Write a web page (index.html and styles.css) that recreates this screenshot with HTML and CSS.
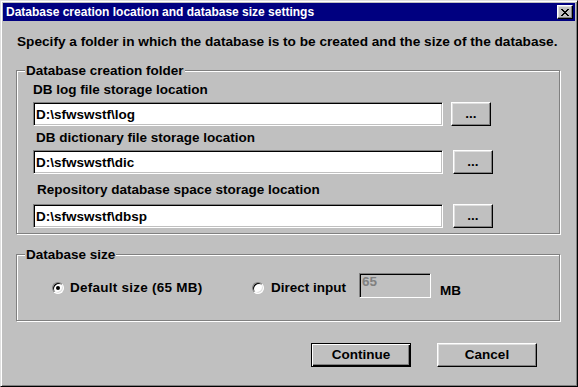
FILE: index.html
```html
<!DOCTYPE html>
<html>
<head>
<meta charset="utf-8">
<link rel="stylesheet" href="styles.css">
</head>
<body>
<div class="window">
  <div class="titlebar">
    <span class="title">Database creation location and database size settings</span>
    <span class="close">
      <svg width="8" height="7" viewBox="0 0 8 7" shape-rendering="crispEdges">
        <rect x="0" y="0" width="2" height="1"/><rect x="6" y="0" width="2" height="1"/>
        <rect x="1" y="1" width="2" height="1"/><rect x="5" y="1" width="2" height="1"/>
        <rect x="2" y="2" width="4" height="1"/>
        <rect x="3" y="3" width="2" height="1"/>
        <rect x="2" y="4" width="4" height="1"/>
        <rect x="1" y="5" width="2" height="1"/><rect x="5" y="5" width="2" height="1"/>
        <rect x="0" y="6" width="2" height="1"/><rect x="6" y="6" width="2" height="1"/>
      </svg>
    </span>
  </div>

  <p class="intro">Specify a folder in which the database is to be created and the size of the database.</p>

  <fieldset class="group group-folder">
    <legend>Database creation folder</legend>
    <div class="fields">
      <div class="label label-1">DB log file storage location</div>
      <div class="row">
        <div class="edit">D:\sfwswstf\log</div>
        <div class="btn browse browse-1">...</div>
      </div>
      <div class="label label-2">DB dictionary file storage location</div>
      <div class="row">
        <div class="edit">D:\sfwswstf\dic</div>
        <div class="btn browse">...</div>
      </div>
      <div class="label label-3">Repository database space storage location</div>
      <div class="row row-3">
        <div class="edit">D:\sfwswstf\dbsp</div>
        <div class="btn browse">...</div>
      </div>
    </div>
  </fieldset>

  <fieldset class="group group-size">
    <legend>Database size</legend>
    <div class="radios">
      <div class="opt opt-1"><span class="radio checked"><span class="dot"></span></span><span class="opt-label">Default size (65 MB)</span></div>
      <div class="opt opt-2"><span class="radio"></span><span class="opt-label">Direct input</span></div>
      <div class="edit size-edit">65</div>
      <span class="unit">MB</span>
    </div>
  </fieldset>

  <div class="actions">
    <div class="btn push default">Continue</div>
    <div class="btn push">Cancel</div>
  </div>
</div>
</body>
</html>
```

FILE: styles.css
```css
html, body {
  margin: 0;
  padding: 0;
  background: #c0c0c0;
}

body {
  font-family: "Liberation Sans", Arial, sans-serif;
  font-weight: 700;
  font-size: 13.5px;
  line-height: 16px;
  color: #000;
}

.window {
  width: 578px;
  height: 387px;
  box-sizing: border-box;
  border: 1px solid;
  border-color: #dfdfdf #000 #000 #dfdfdf;
  box-shadow: inset 1px 1px #fff, inset -1px -1px #808080;
  padding: 2px;
  background: #c0c0c0;
}

.titlebar {
  height: 18px;
  background: #000080;
  color: #fff;
  display: flex;
  align-items: center;
  justify-content: space-between;
  padding: 0 2px 0 3px;
}

.title {
  font-size: 12px;
  line-height: 18px;
}

.close {
  width: 16px;
  height: 14px;
  box-sizing: border-box;
  border: 1px solid;
  border-color: #fff #000 #000 #fff;
  box-shadow: inset -1px -1px #808080, inset 1px 1px #dfdfdf;
  background: #c0c0c0;
  display: flex;
  align-items: center;
  justify-content: center;
}

.close svg {
  display: block;
  fill: #000;
}

.intro {
  margin: 13px 0 0 14px;
  font-size: 13.65px;
}

.group {
  margin: 13px 0 0 13px;
  width: 544px;
  min-width: 0;
  box-sizing: border-box;
  border: 1px solid #808080;
  box-shadow: inset 1px 1px #fff, 1px 1px #fff;
  padding: 0;
}

.group legend {
  margin-left: 8px;
  padding: 0 1px;
  line-height: 15px;
  background: #c0c0c0;
}

.fields {
  padding: 4px 0 5px 16px;
}

.label-2 { margin: 4px 0 0 3px; }
.label-3 { margin: 8px 0 0 4px; }

.row {
  display: flex;
  margin-top: 4px;
}

.row-3 { margin-top: 6px; }

.edit {
  width: 410px;
  height: 24px;
  box-sizing: border-box;
  border: 1px solid;
  border-color: #808080 #fff #fff #808080;
  box-shadow: inset 1px 1px #000, inset -1px -1px #c0c0c0;
  background: #fff;
  padding: 4px 2px 0 2px;
  white-space: nowrap;
}

.btn {
  box-sizing: border-box;
  height: 24px;
  border: 1px solid;
  border-color: #fff #000 #000 #fff;
  box-shadow: inset -1px -1px #808080, inset 1px 1px #dfdfdf;
  background: #c0c0c0;
  display: flex;
  align-items: center;
  justify-content: center;
}

.browse {
  width: 40px;
  margin-left: 10px;
}

.browse-1 { margin-left: 8px; }

.radios {
  display: flex;
  align-items: flex-start;
  padding: 11px 0 21px 35px;
}

.opt {
  display: flex;
  align-items: flex-start;
}

.opt-1 { width: 200px; }
.opt-2 { width: 107px; }

.radio {
  width: 12px;
  height: 12px;
  box-sizing: border-box;
  border-radius: 50%;
  border: 1px solid;
  border-color: #808080 #fff #fff #808080;
  box-shadow: inset 1px 1px #000, inset -1px -1px #dfdfdf;
  background: #fff;
  margin: 9px 6px 0 0;
  display: flex;
  align-items: center;
  justify-content: center;
}

.dot {
  width: 4px;
  height: 4px;
  border-radius: 50%;
  background: #000;
}

.opt-2 .radio { margin-right: 7px; }

.opt-label {
  margin-top: 7px;
}

.opt-1 .opt-label {
  letter-spacing: 0.25px;
}

.size-edit {
  width: 72px;
  height: 25px;
  background: #c0c0c0;
  color: #808080;
  padding: 0 2px;
}

.unit {
  margin: 10px 0 0 9px;
}

.actions {
  display: flex;
  justify-content: flex-end;
  gap: 26px;
  margin-top: 22px;
  padding-right: 38px;
}

.push {
  width: 100px;
}

.default {
  border-color: #000;
  box-shadow: inset 1px 1px #fff, inset -1px -1px #000, inset -2px -2px #808080;
}
```
